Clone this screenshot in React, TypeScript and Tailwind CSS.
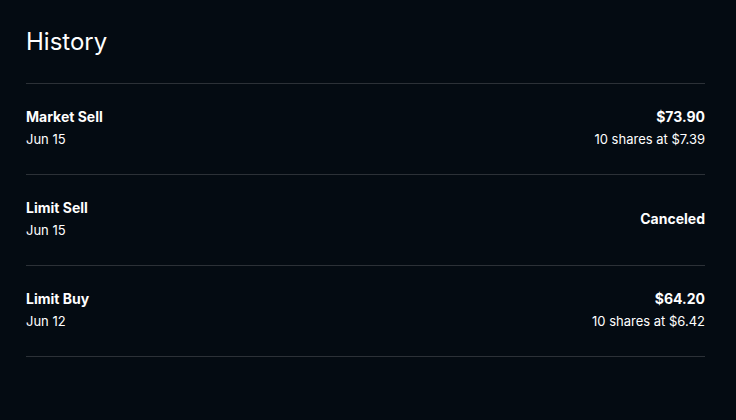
import React from 'react';

type Item = {
  title: string;
  date: string;
  amount: string;
  detail?: string;
};

const ITEMS: Item[] = [
  { title: 'Market Sell', date: 'Jun 15', amount: '$73.90', detail: '10 shares at $7.39' },
  { title: 'Limit Sell', date: 'Jun 15', amount: 'Canceled' },
  { title: 'Limit Buy', date: 'Jun 12', amount: '$64.20', detail: '10 shares at $6.42' },
];

const HistoryRow: React.FC<{ item: Item }> = ({ item }) => (
  <div className="flex items-center justify-between border-b border-[#2c3137] pt-[23px] pb-[25px]">
    <div className="flex flex-col">
      <span className="text-[14px] font-bold leading-5 text-white">{item.title}</span>
      <span className="mt-[3px] text-[13px] leading-[19px] text-white">{item.date}</span>
    </div>
    <div className="flex flex-col items-end self-stretch justify-center">
      <span className="text-[14px] font-bold leading-5 text-white">{item.amount}</span>
      {item.detail && (
        <span className="mt-[3px] text-[13px] leading-[19px] text-white">{item.detail}</span>
      )}
    </div>
  </div>
);

export default function App() {
  return (
    <div
      className="min-h-screen w-full bg-[#040b12] pl-[26px] pr-[31px] pt-[27px]"
      style={{ fontFamily: 'Inter, "Noto Sans", sans-serif' }}
    >
      <h1 className="text-[24px] font-normal leading-[30px] text-white">History</h1>
      <div className="mt-[26px] border-t border-[#2c3137]">
        {ITEMS.map((item) => (
          <HistoryRow key={item.title} item={item} />
        ))}
      </div>
    </div>
  );
}
